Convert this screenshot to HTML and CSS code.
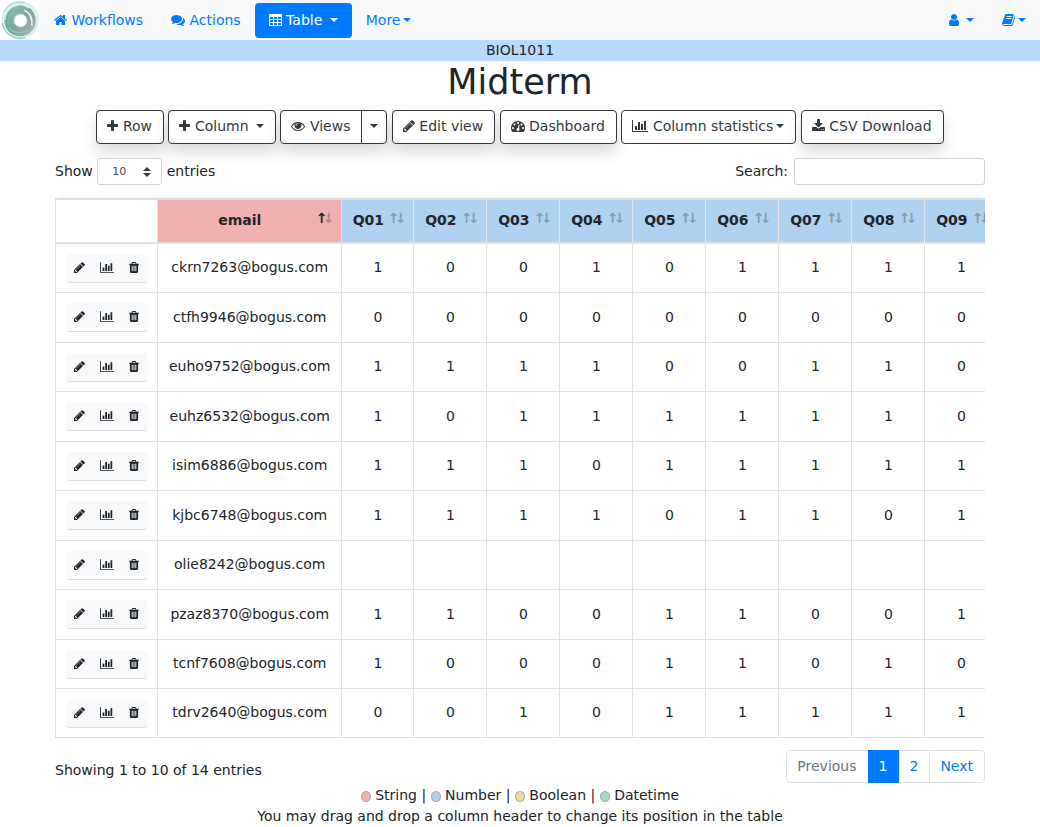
FILE: index.html
```html
<!DOCTYPE html>
<html lang="en">
<head>
<meta charset="utf-8">
<meta name="viewport" content="width=device-width, initial-scale=1">
<title>Midterm</title>
<link rel="stylesheet" href="styles.css">
</head>
<body>
<svg class="sprite" aria-hidden="true">
  <symbol id="plus" viewBox="192 0 1408 1792"><path d="M1600 736v192q0 40-28 68t-68 28h-416v416q0 40-28 68t-68 28h-192q-40 0-68-28t-28-68v-416h-416q-40 0-68-28t-28-68v-192q0-40 28-68t68-28h416v-416q0-40 28-68t68-28h192q40 0 68 28t28 68v416h416q40 0 68 28t28 68z"/></symbol>
  <symbol id="home" viewBox="64 0 1664 1792"><path d="M1472 992v480q0 26-19 45t-45 19h-384v-384h-256v384h-384q-26 0-45-19t-19-45v-480q0-1 .5-3t.5-3l575-474 575 474q1 2 1 6zm223-69l-62 74q-8 9-21 11h-3q-13 0-21-7l-692-577-692 577q-12 8-24 7-13-2-21-11l-62-74q-8-10-7-23.5t11-21.5l719-599q32-26 76-26t76 26l244 204v-195q0-14 9-23t23-9h192q14 0 23 9t9 23v408l219 182q10 8 11 21.5t-7 23.5z"/></symbol>
  <symbol id="comments" viewBox="0 0 1792 1792"><path d="M1408 768q0 139-94 257t-256.5 186.5-353.5 68.5q-86 0-176-16-124 88-278 128-36 9-86 16h-3q-11 0-20.5-8t-11.5-21q-1-3-1-6.5t.5-6.5 2-6l2.5-5t3.5-5.500 4-5 4.500-5 4-4.500q5-6 23-25t26-29.500 22.500-29 25-38.500 20.500-44q-124-72-195-177t-71-224q0-139 94-257t256.500-186.500 353.500-68.500 353.500 68.500 256.500 186.500 94 257zm384 256q0 120-71 224.500t-195 176.500q10 24 20.500 44t25 38.500 22.500 29 26 29.500 23 25q1 1 4 4.500t4.500 5 4 5 3.500 5.500l2.500 5t2 6 .5 6.500-1 6.500q-3 14-13 22t-22 7q-50-7-86-16-154-40-278-128-90 16-176 16-271 0-472-132 58 4 88 4 161 0 309-45t264-129q125-92 192-212t67-254q0-77-23-152 129 71 204 178t75 230z"/></symbol>
  <symbol id="table" viewBox="0 0 13 14"><path fill-rule="evenodd" d="M1.200 1h10.600a1.200 1.200 0 0 1 1.200 1.200v9.600a1.200 1.200 0 0 1-1.200 1.200h-10.600a1.200 1.200 0 0 1-1.200-1.200v-9.600a1.200 1.200 0 0 1 1.200-1.200zM1 4v2h3v-2zM5 4v2h3v-2zM9 4v2h3v-2zM1 7v2h3v-2zM5 7v2h3v-2zM9 7v2h3v-2zM1 10v2h3v-2zM5 10v2h3v-2zM9 10v2h3v-2z"/></symbol>
  <symbol id="pencil" viewBox="128 0 1536 1792"><path d="M491 1536l91-91-235-235-91 91v107h128v128h107zm523-928q0-22-22-22-10 0-17 7l-542 542q-7 7-7 17 0 22 22 22 10 0 17-7l542-542q7-7 7-17zm-54-192l416 416-832 832h-416v-416zm683 96q0 53-37 90l-166 166-416-416 166-165q36-38 90-38 53 0 91 38l235 234q37 39 37 91z"/></symbol>
  <symbol id="chart" viewBox="0 0 2048 1792"><path d="M640 896v512h-256v-512h256zm384-512v1024h-256v-1024h256zm1024 1152v128h-2048v-1536h128v1408h1920zm-640-896v768h-256v-768h256zm384-384v1152h-256v-1152h256z"/></symbol>
  <symbol id="trash" viewBox="192 0 1408 1792"><path d="M704 1376v-704q0-14-9-23t-23-9h-64q-14 0-23 9t-9 23v704q0 14 9 23t23 9h64q14 0 23-9t9-23zm256 0v-704q0-14-9-23t-23-9h-64q-14 0-23 9t-9 23v704q0 14 9 23t23 9h64q14 0 23-9t9-23zm256 0v-704q0-14-9-23t-23-9h-64q-14 0-23 9t-9 23v704q0 14 9 23t23 9h64q14 0 23-9t9-23zm-544-992h448l-48-117q-7-9-17-11h-317q-10 2-17 11zm928 32v64q0 14-9 23t-23 9h-96v948q0 83-47 143.500t-113 60.500h-832q-66 0-113-58.500t-47-141.500v-952h-96q-14 0-23-9t-9-23v-64q0-14 9-23t23-9h309l70-167q15-37 54-63t79-26h320q40 0 79 26t54 63l70 167h309q14 0 23 9t9 23z"/></symbol>
  <symbol id="eye" viewBox="0 0 1792 1792"><path d="M1664 960q-152-236-381-353 61 104 61 225 0 185-131.500 316.500t-316.500 131.500-316.500-131.500-131.500-316.500q0-121 61-225-229 117-381 353 133 205 333.500 326.500t434.500 121.500 434.500-121.500 333.500-326.500zm-720-384q0-20-14-34t-34-14q-125 0-214.500 89.500t-89.500 214.500q0 20 14 34t34 14 34-14 14-34q0-86 61-147t147-61q20 0 34-14t14-34zm848 384q0 34-20 69-140 230-376.500 368.500t-499.500 138.500-499.500-139-376.500-368q-20-35-20-69t20-69q140-229 376.500-368t499.500-139 499.500 139 376.500 368q20 35 20 69z"/></symbol>
  <symbol id="dashboard" viewBox="0 0 1792 1792"><path d="M384 1152q0-53-37.500-90.500t-90.500-37.500-90.500 37.500-37.500 90.500 37.500 90.500 90.500 37.500 90.500-37.500 37.500-90.500zm192-448q0-53-37.500-90.500t-90.500-37.500-90.500 37.500-37.500 90.500 37.500 90.500 90.500 37.500 90.500-37.500 37.500-90.500zm428 481l101-382q6-26-7.500-48.500t-38.500-29.500-48 6.500-30 39.500l-101 382q-60 5-107 43.500t-63 98.500q-20 77 20 146t117 89 146-20 89-117q16-60-6-117t-72-91zm660-33q0-53-37.500-90.500t-90.500-37.500-90.500 37.500-37.500 90.500 37.500 90.500 90.500 37.500 90.500-37.500 37.500-90.500zm-640-640q0-53-37.500-90.500t-90.500-37.500-90.500 37.500-37.500 90.500 37.500 90.500 90.500 37.500 90.500-37.500 37.500-90.500zm448 192q0-53-37.500-90.500t-90.500-37.500-90.500 37.500-37.500 90.500 37.500 90.500 90.500 37.500 90.500-37.500 37.500-90.500zm320 448q0 261-141 483-19 29-54 29h-1402q-35 0-54-29-141-221-141-483 0-182 71-348t191-286 286-191 348-71 348 71 286 191 191 286 71 348z"/></symbol>
  <symbol id="download" viewBox="64 0 1664 1792"><path d="M1344 1344q0-26-19-45t-45-19-45 19-19 45 19 45 45 19 45-19 19-45zm256 0q0-26-19-45t-45-19-45 19-19 45 19 45 45 19 45-19 19-45zm128-224v320q0 40-28 68t-68 28h-1472q-40 0-68-28t-28-68v-320q0-40 28-68t68-28h465l135 136q58 56 136 56t136-56l136-136h464q40 0 68 28t28 68zm-325-569q17 41-14 70l-448 448q-18 19-45 19t-45-19l-448-448q-31-29-14-70 17-39 59-39h256v-448q0-26 19-45t45-19h256q26 0 45 19t19 45v448h256q42 0 59 39z"/></symbol>
  <symbol id="user" viewBox="256 0 1280 1792"><path d="M1536 1399q0 109-62.500 187t-150.500 78h-854q-88 0-150.500-78t-62.500-187q0-85 8.500-160.500t31.500-152 58.500-131 94-89 134.500-34.500q131 128 313 128t313-128q76 0 134.500 34.500t94 89 58.500 131 31.500 152 8.500 160.500zm-256-887q0 159-112.500 271.500t-271.500 112.500-271.500-112.500-112.500-271.500 112.500-271.500 271.500-112.500 271.500 112.500 112.500 271.500z"/></symbol>
  <symbol id="book" viewBox="64 0 1664 1792"><path d="M1703 478q40 57 18 129l-275 906q-19 64-76.500 107.500t-122.500 43.500h-923q-77 0-148.500-53.500t-99.500-131.500q-24-67-2-127 0-4 3-27t4-37q1-8-3-21.500t-3-19.500q2-11 8-21t16.500-23.500 16.500-23.500q23-38 45-91.500t30-91.500q3-10 .5-30t-.5-28q3-11 17-28t17-23q21-36 42-92t25-90q1-9-2.500-32t.5-28q4-13 22-30.500t22-22.500q19-26 42.500-84.500t27.500-96.500q1-8-3-25.500t-2-26.500q2-8 9-18t18-23 17-21q8-12 16.500-30.500t15-35 16-36 19.500-32 26.500-23.500 36-11.500 47.500 5.500l-1 3q38-9 51-9h761q74 0 114 56t18 130l-274 906q-36 119-71.500 153.500t-128.500 34.500h-869q-27 0-38 15-11 16-1 43 24 70 144 70h923q29 0 56-15.500t35-41.500l300-987q7-22 5-57 38 15 59 43zm-1064 2q-4 13 2 22.500t20 9.500h608q13 0 25.500-9.500t16.500-22.500l21-64q4-13-2-22.500t-20-9.500h-608q-13 0-25.500 9.500t-16.500 22.500zm-83 256q-4 13 2 22.500t20 9.500h608q13 0 25.500-9.500t16.500-22.500l21-64q4-13-2-22.500t-20-9.500h-608q-13 0-25.500 9.500t-16.500 22.500z"/></symbol>
</svg>

<nav class="navbar">
  <a class="brand" href="#" aria-label="Home">
    <svg class="logo" viewBox="0 0 40 40" aria-hidden="true">
      <defs><linearGradient id="ring" x1="0" y1="0" x2="1" y2="1"><stop offset="0" stop-color="#8dbdb2"/><stop offset=".5" stop-color="#7aa59f"/><stop offset="1" stop-color="#b0abb0"/></linearGradient></defs>
      <rect width="40" height="40" fill="#fff"/>
      <circle cx="20" cy="20" r="17.500" fill="none" stroke="#d3f2ec" stroke-width="2.500"/>
      <circle cx="20" cy="20.500" r="11" fill="none" stroke="url(#ring)" stroke-width="9.500"/>
      <path d="M4 12A18 18 0 0 1 25 2.500" fill="none" stroke="#a9ddd3" stroke-width="1.200"/>
      <path d="M2.500 23A17.500 17.500 0 0 0 25 37.500" fill="none" stroke="#6fdcc6" stroke-width="1.200"/>
      <path d="M5 20A15 15 0 0 1 29 8" fill="none" stroke="#dcebe8" stroke-width="1.200"/>
      <path d="M8 27A13.500 13.500 0 0 1 12 10" fill="none" stroke="#55b3a1" stroke-width="1.200"/>
      <path d="M24 10Q33 14 32 26" fill="none" stroke="#e4f4f1" stroke-width="1.600"/>
      <path d="M9 28Q17 36 29 30" fill="none" stroke="#8fc4ba" stroke-width="1.500"/>
      <circle cx="20.500" cy="20.500" r="6.600" fill="#fff" stroke="#b5cfca" stroke-width="1"/>
    </svg>
  </a>
  <div class="nav-group">
    <a class="nav-link" href="#"><svg class="icon w13"><use href="#home"/></svg> Workflows</a>
    <a class="nav-link" href="#"><svg class="icon w14"><use href="#comments"/></svg> Actions</a>
    <a class="nav-link active" href="#"><svg class="icon w13"><use href="#table"/></svg> Table <span class="caret"></span></a>
    <a class="nav-link" href="#">More<span class="caret"></span></a>
  </div>
  <div class="nav-group nav-end">
    <a class="nav-link" href="#" aria-label="User"><svg class="icon w10"><use href="#user"/></svg> <span class="caret"></span></a>
    <a class="nav-link" href="#" aria-label="Documentation"><svg class="icon w13"><use href="#book"/></svg><span class="caret"></span></a>
  </div>
</nav>
<div class="workflow-bar">BIOL1011</div>

<main class="content">
  <h1 class="title">Midterm</h1>
  <div class="toolbar">
    <button class="btn raised" type="button"><svg class="icon w11"><use href="#plus"/></svg> Row</button>
    <button class="btn raised" type="button"><svg class="icon w11"><use href="#plus"/></svg> Column <span class="caret"></span></button>
    <span class="btn-group raised"><button class="btn" type="button"><svg class="icon w14"><use href="#eye"/></svg> Views</button><button class="btn btn-split" type="button" aria-label="Choose view"><span class="caret"></span></button></span>
    <button class="btn raised" type="button"><svg class="icon w12"><use href="#pencil"/></svg> Edit view</button>
    <button class="btn raised" type="button"><svg class="icon w14"><use href="#dashboard"/></svg> Dashboard</button>
    <button class="btn" type="button"><svg class="icon w16"><use href="#chart"/></svg> Column statistics<span class="caret"></span></button>
    <button class="btn raised" type="button"><svg class="icon w13"><use href="#download"/></svg> CSV Download</button>
  </div>

  <div class="controls">
    <label>Show <select class="length"><option>10</option><option>25</option><option>50</option></select> entries</label>
    <label class="search">Search: <input class="search-box" type="search"></label>
  </div>

  <div class="table-wrap">
    <table class="data">
      <thead>
        <tr><th class="ops"></th><th class="string asc">email</th><th class="number">Q01</th><th class="number">Q02</th><th class="number">Q03</th><th class="number">Q04</th><th class="number">Q05</th><th class="number">Q06</th><th class="number">Q07</th><th class="number">Q08</th><th class="number">Q09</th></tr>
      </thead>
      <tbody id="rows"></tbody>
    </table>
  </div>

  <div class="footer-row">
    <div class="info">Showing 1 to 10 of 14 entries</div>
    <nav class="pages" aria-label="Pages"><a class="page disabled" href="#">Previous</a><a class="page current" href="#">1</a><a class="page" href="#">2</a><a class="page" href="#">Next</a></nav>
  </div>
  <div class="legend"><span class="dot string"></span> String | <span class="dot number"></span> Number | <span class="dot boolean"></span> Boolean | <span class="dot datetime"></span> Datetime</div>
  <div class="legend">You may drag and drop a column header to change its position in the table</div>
</main>
<script src="table.js"></script>
</body>
</html>
```
FILE: styles.css
```css
* { box-sizing: border-box; }
body {
  margin: 0;
  font: 14px/21px "DejaVu Sans", sans-serif;
  color: #212529;
  background: #fff;
}
a { color: #007bff; text-decoration: none; }
button, input, select { font-family: inherit; }

.sprite { position: absolute; width: 0; height: 0; }
.icon { height: 14px; vertical-align: -2px; fill: currentColor; }
.w10 { width: 10px; }
.w11 { width: 11px; }
.w12 { width: 12px; }
.w13 { width: 13px; }
.w14 { width: 14px; }
.w16 { width: 16px; }
.caret {
  display: inline-block;
  margin-left: 3px;
  vertical-align: 3px;
  border: 4px solid transparent;
  border-top-color: currentColor;
  border-bottom: 0;
}

.navbar { display: flex; align-items: center; background: #f8f9fa; }
.brand, .logo { display: block; width: 40px; height: 40px; }
.nav-group { display: flex; }
.nav-end { margin-left: auto; }
.nav-link { padding: 7px 14px; border-radius: 4px; white-space: nowrap; }
.nav-link.active { color: #fff; background: #007bff; }
.workflow-bar { text-align: center; background: #b8daff; }

.content { padding: 0 55px; }
.title { margin: 0 0 7px; font-size: 35px; font-weight: 500; line-height: 42px; text-align: center; }

.toolbar { text-align: center; }
.btn {
  padding: 5px 11px 6px 10px;
  font-size: 14px;
  line-height: 21px;
  color: #343a40;
  background: #fff;
  border: 1px solid #343a40;
  border-radius: 4px;
}
.raised { box-shadow: 0 8px 16px rgba(0, 0, 0, .15); }
.btn-group { display: inline-flex; border-radius: 4px; }
.btn-group .btn:first-child { border-radius: 4px 0 0 4px; }
.btn-group .btn-split { margin-left: -1px; padding: 5px 8px 6px; border-radius: 0 4px 4px 0; }
.btn-split .caret { margin-left: 0; }

.controls { display: flex; justify-content: space-between; align-items: center; margin: 14px 0 13px; }
.length, .search-box {
  height: 27px;
  color: #495057;
  border: 1px solid #ced4da;
  border-radius: 3px;
}
.length {
  width: 65px;
  padding: 0 14px;
  font-size: 11px;
  vertical-align: middle;
  appearance: none;
  background: #fff url("data:image/svg+xml,%3Csvg xmlns='http://www.w3.org/2000/svg' viewBox='0 0 4 5'%3E%3Cpath fill='%23343a40' d='M2 0L0 2h4zm0 5L0 3h4z'/%3E%3C/svg%3E") no-repeat right 10px center / 8px 10px;
}
.search { display: flex; align-items: center; gap: 6px; }
.search-box { width: 191px; padding: 4px 7px; font-size: 12px; background: #fff; appearance: none; }

.table-wrap { overflow: hidden; box-shadow: 0 -3px 6px -3px rgba(0, 0, 0, .08); }
.data { width: max-content; min-width: 100%; border-collapse: collapse; text-align: center; white-space: nowrap; }
.data th, .data td { border: 1px solid #dee2e6; }
.data th { position: relative; height: 44px; padding: 0 30px 2px 10px; border-width: 2px 1px; }
.data th.number { width: 73px; padding-right: 29px; }
.data th.asc + .number { width: 72px; }
.data td { height: 49px; padding: 0 11px; }
.data td:first-child { padding-right: 10px; }
.data tr:nth-child(even) td { height: 50px; }
.data tr:last-child td { height: 49px; }
.string { background: #f1b0b0; }
.number { background: #aed2f0; }
.boolean { background: #f0dc96; }
.datetime { background: #a3dbbb; }
.data .string::before, .data .string::after,
.data .number::before, .data .number::after { position: absolute; top: 8px; opacity: .3; }
.data .string::before, .data .number::before { right: 14px; content: "\2191"; }
.data .string::after, .data .number::after { right: 7px; content: "\2193"; }
.data .asc::before { opacity: 1; }

.actions { display: inline-flex; vertical-align: middle; border-radius: 3px; box-shadow: 0 1px 1px rgba(0, 0, 0, .15); }
.action {
  padding: 5px 8px 4px 7px;
  font-size: 12px;
  line-height: 19px;
  color: #212529;
  background: #f8f9fa;
  border: 0;
}
.action:first-child { border-radius: 3px 0 0 3px; }
.action:last-child { border-radius: 0 3px 3px 0; }
.action .icon { height: 13px; }

.footer-row { display: flex; justify-content: space-between; margin-top: 12px; }
.info { padding-top: 10px; }
.pages { display: flex; }
.page { padding: 5px 11px 5px 10px; border: 1px solid #dee2e6; background: #fff; }
.page + .page { margin-left: -1px; }
.page:first-child { border-radius: 4px 0 0 4px; }
.page:last-child { border-radius: 0 4px 4px 0; }
.page.disabled { color: #6c757d; }
.page.current { position: relative; color: #fff; background: #007bff; border-color: #007bff; }
.legend { text-align: center; }
.dot { display: inline-block; width: 10px; height: 11px; vertical-align: -2px; border: 1px solid #aaa; border-radius: 50%; }
.footer-row + .legend { margin-top: 2px; }
```
FILE: table.js
```javascript
const students = [
  ["ckrn7263", "100101111"],
  ["ctfh9946", "000000000"],
  ["euho9752", "111100110"],
  ["euhz6532", "101111110"],
  ["isim6886", "111011111"],
  ["kjbc6748", "111101101"],
  ["olie8242", "         "],
  ["pzaz8370", "110011001"],
  ["tcnf7608", "100011010"],
  ["tdrv2640", "001011111"]
];
const action = (icon, width, label) =>
  `<button class="action" type="button" aria-label="${label}"><svg class="icon ${width}"><use href="#${icon}"/></svg></button>`;
const actions = `<span class="actions">${action("pencil", "w11", "Edit row")}${action("chart", "w14", "Row statistics")}${action("trash", "w10", "Delete row")}</span>`;
document.getElementById("rows").innerHTML = students.map(([name, marks]) =>
  `<tr><td>${actions}</td><td>${name}@bogus.com</td>${[...marks].map(mark => `<td>${mark.trim()}</td>`).join("")}</tr>`
).join("");
```
